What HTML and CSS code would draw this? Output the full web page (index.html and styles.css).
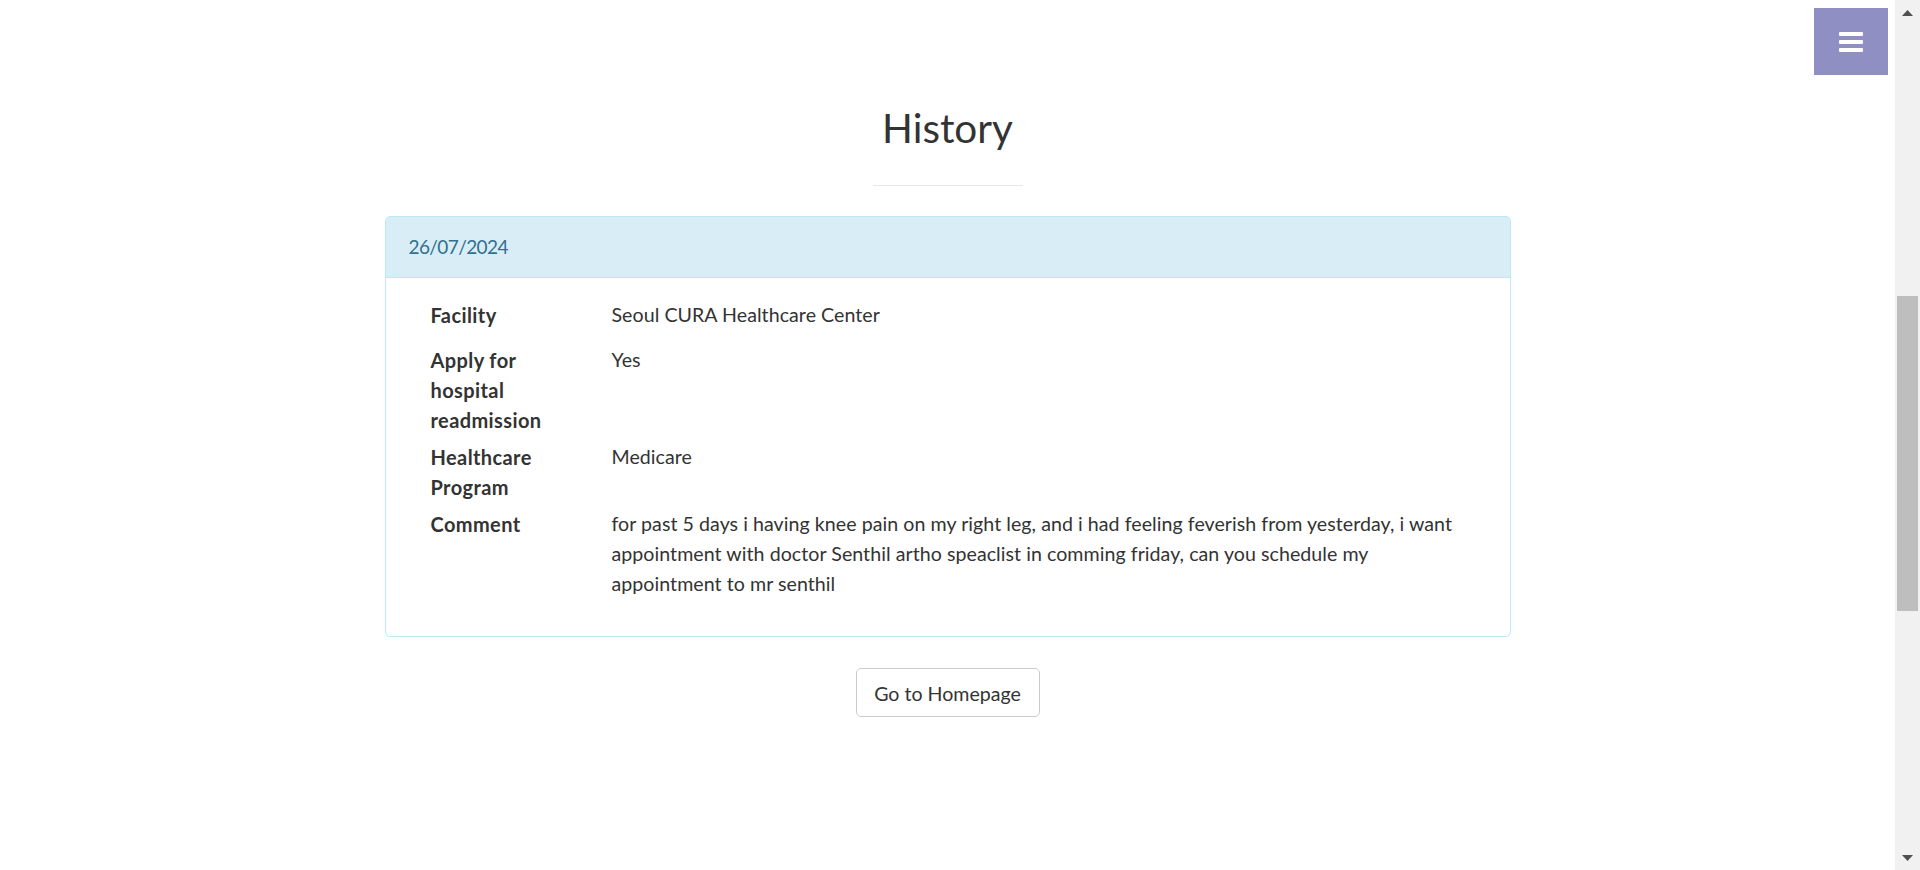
FILE: index.html
```html
<!DOCTYPE html>
<html lang="en">
<head>
<meta charset="utf-8">
<title>CURA Healthcare Service - History</title>
<link rel="stylesheet" href="styles.css">
</head>
<body>
<div class="viewport">
  <main class="page">
    <a class="menu-toggle" href="#" aria-label="Menu">
      <span class="bar"></span><span class="bar"></span><span class="bar"></span>
    </a>
    <section class="history">
      <h2 class="title">History</h2>
      <hr class="divider">
      <div class="panel">
        <div class="panel-heading"><span class="date">26/07/2024</span></div>
        <div class="panel-body">
          <div class="row row-first">
            <div class="label">Facility</div>
            <div class="value">Seoul CURA Healthcare Center</div>
          </div>
          <div class="row">
            <div class="label">Apply for hospital readmission</div>
            <div class="value">Yes</div>
          </div>
          <div class="row">
            <div class="label">Healthcare Program</div>
            <div class="value">Medicare</div>
          </div>
          <div class="row">
            <div class="label">Comment</div>
            <div class="value">for past 5 days i having knee pain on my right leg, and i had feeling feverish from yesterday, i want appointment with doctor Senthil artho speaclist in comming friday, can you schedule my appointment to mr senthil</div>
          </div>
        </div>
      </div>
      <a class="btn" href="#">Go to Homepage</a>
    </section>
  </main>
  <div class="scrollbar">
    <div class="arrow">
      <svg width="11" height="6" viewBox="0 0 11 6"><polygon points="0,6 11,6 5.5,0" fill="#505050"/></svg>
    </div>
    <div class="track"><div class="thumb"></div></div>
    <div class="arrow">
      <svg width="11" height="6" viewBox="0 0 11 6"><polygon points="0,0 11,0 5.5,6" fill="#505050"/></svg>
    </div>
  </div>
</div>
</body>
</html>
```
FILE: styles.css
```css
html, body {
  margin: 0;
  height: 100%;
}
body {
  font-family: Lato, "Liberation Sans", sans-serif;
  color: #333;
  background: #fff;
  overflow: hidden;
}
.viewport {
  display: flex;
  height: 100vh;
}
.page {
  flex: 1;
  position: relative;
  min-width: 0;
}
.menu-toggle {
  position: absolute;
  top: 8px;
  right: 7px;
  width: 74px;
  height: 67px;
  background: #8f8fc4;
  display: flex;
  flex-direction: column;
  align-items: center;
  justify-content: center;
  gap: 4px;
}
.bar {
  display: block;
  width: 24px;
  height: 4px;
  background: #fff;
  border-radius: 1px;
}
.history {
  display: flex;
  flex-direction: column;
  align-items: center;
  padding-top: 108px;
}
.title {
  margin: 0;
  font-size: 40.5px;
  line-height: 40px;
  font-weight: 400;
  color: #333;
}
.divider {
  width: 150px;
  margin: 37px 0 30px;
  border: 0;
  border-top: 1px solid #e8e8e8;
  height: 0;
}
.panel {
  width: 1126px;
  box-sizing: border-box;
  border: 1px solid #bce8f1;
  border-radius: 5px;
  font-size: 19.6px;
  letter-spacing: 0.05px;
  line-height: 30px;
}
.panel-heading {
  background: #d9edf7;
  color: #31708f;
  padding: 15px 23px;
  border-bottom: 1px solid #bce8f1;
  border-radius: 4px 4px 0 0;
  font-size: 19px;
}
.date {
  letter-spacing: -0.6px;
}
.panel-body {
  padding: 22px 20px 37px 45px;
}
.row {
  display: flex;
  margin-bottom: 7px;
}
.row:last-child {
  margin-bottom: 0;
}
.row-first {
  margin-bottom: 15px;
}
.label {
  width: 181px;
  flex: none;
  font-size: 20px;
  font-weight: 700;
  letter-spacing: 0.4px;
  padding-right: 41px;
  box-sizing: border-box;
}
.value {
  width: 860px;
}
.btn {
  margin-top: 31px;
  width: 184px;
  box-sizing: border-box;
  padding: 11px 0 9px;
  text-align: center;
  font-size: 19.6px;
  line-height: 27px;
  color: #333;
  text-decoration: none;
  border: 1px solid #ccc;
  border-radius: 5px;
  background: #fff;
}
.scrollbar {
  width: 25px;
  flex: none;
  background: #f1f1f1;
  display: flex;
  flex-direction: column;
}
.arrow {
  height: 25px;
  display: flex;
  align-items: center;
  justify-content: center;
}
.track {
  flex: 1;
  padding: 271px 2px 0;
}
.thumb {
  height: 315px;
  background: #bebebe;
}
```
